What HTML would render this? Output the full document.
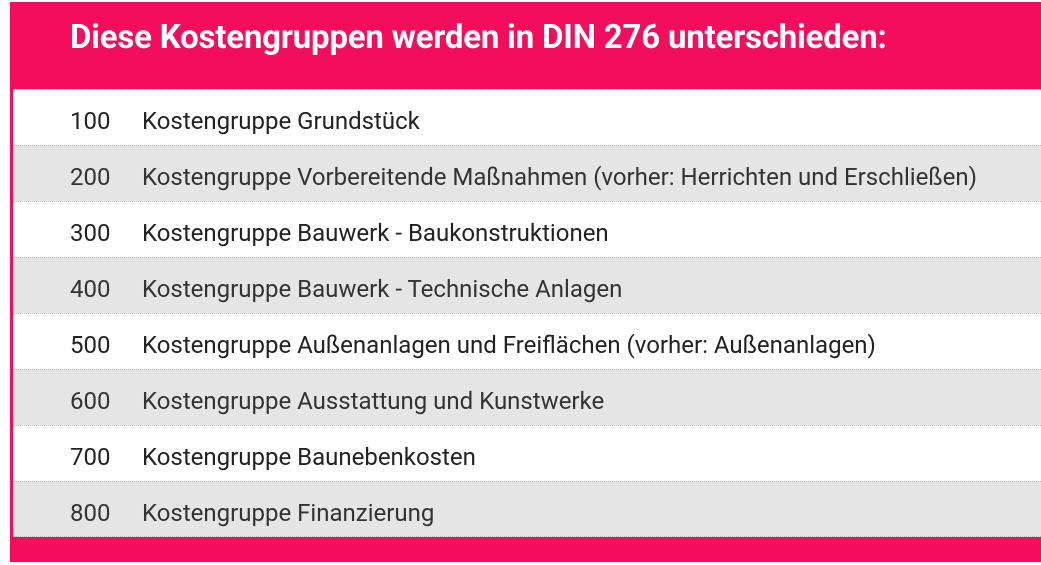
<!DOCTYPE html>
<html><head><meta charset="utf-8"><style>
body{margin:0;width:1041px;height:565px;background:#fff;overflow:hidden;font-family:"Roboto","Liberation Sans",sans-serif;}
.box{position:absolute;left:10px;top:2px;width:1031px;height:560px;background:#f20e5d;}
h1{position:absolute;left:60px;top:16px;margin:0;color:#fff;font-size:33px;font-weight:bold;white-space:nowrap;letter-spacing:-0.2px;}
.tbl{position:absolute;left:3px;top:87px;width:1028px;}
.row{height:56px;border-top:1px dotted #bbb;box-sizing:border-box;position:relative;font-size:24px;color:#222;}
.row:nth-child(even){background:#e5e5e5;color:#333;}
.row:nth-child(odd){background:#fff;}
.row:last-child{border-bottom:1px dotted #bbb;}
.n{position:absolute;left:57px;top:17px;line-height:28px;}
.t{position:absolute;left:129px;top:17px;line-height:28px;white-space:nowrap;}
</style></head><body>
<div class="box">
<h1>Diese Kostengruppen werden in DIN 276 unterschieden:</h1>
<div class="tbl">
<div class="row"><span class="n">100</span><span class="t">Kostengruppe Grundstück</span></div>
<div class="row"><span class="n">200</span><span class="t">Kostengruppe Vorbereitende Maßnahmen (vorher: Herrichten und Erschließen)</span></div>
<div class="row"><span class="n">300</span><span class="t">Kostengruppe Bauwerk - Baukonstruktionen</span></div>
<div class="row"><span class="n">400</span><span class="t">Kostengruppe Bauwerk - Technische Anlagen</span></div>
<div class="row"><span class="n">500</span><span class="t">Kostengruppe Außenanlagen und Freiflächen (vorher: Außenanlagen)</span></div>
<div class="row"><span class="n">600</span><span class="t">Kostengruppe Ausstattung und Kunstwerke</span></div>
<div class="row"><span class="n">700</span><span class="t">Kostengruppe Baunebenkosten</span></div>
<div class="row"><span class="n">800</span><span class="t">Kostengruppe Finanzierung</span></div>
</div>
</div>
</body></html>
